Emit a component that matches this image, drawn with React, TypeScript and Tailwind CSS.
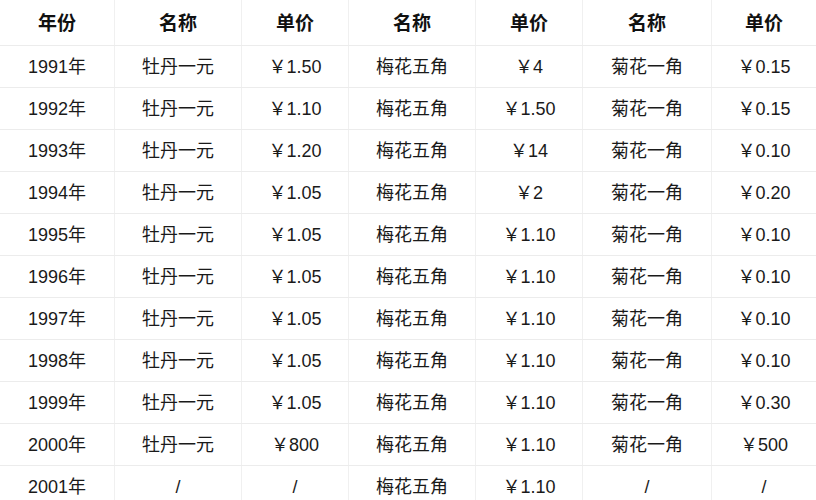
const header = ['年份', '名称', '单价', '名称', '单价', '名称', '单价']

const rows: string[][] = [
  ['1991年', '牡丹一元', '￥1.50', '梅花五角', '￥4', '菊花一角', '￥0.15'],
  ['1992年', '牡丹一元', '￥1.10', '梅花五角', '￥1.50', '菊花一角', '￥0.15'],
  ['1993年', '牡丹一元', '￥1.20', '梅花五角', '￥14', '菊花一角', '￥0.10'],
  ['1994年', '牡丹一元', '￥1.05', '梅花五角', '￥2', '菊花一角', '￥0.20'],
  ['1995年', '牡丹一元', '￥1.05', '梅花五角', '￥1.10', '菊花一角', '￥0.10'],
  ['1996年', '牡丹一元', '￥1.05', '梅花五角', '￥1.10', '菊花一角', '￥0.10'],
  ['1997年', '牡丹一元', '￥1.05', '梅花五角', '￥1.10', '菊花一角', '￥0.10'],
  ['1998年', '牡丹一元', '￥1.05', '梅花五角', '￥1.10', '菊花一角', '￥0.10'],
  ['1999年', '牡丹一元', '￥1.05', '梅花五角', '￥1.10', '菊花一角', '￥0.30'],
  ['2000年', '牡丹一元', '￥800', '梅花五角', '￥1.10', '菊花一角', '￥500'],
  ['2001年', '/', '/', '梅花五角', '￥1.10', '/', '/'],
]

const cols = 'grid grid-cols-[115px_127px_107px_127px_107px_129px_104px]'

export default function App() {
  return (
    <div className="w-[816px] h-[500px] overflow-hidden bg-white font-['Liberation_Sans','Noto_Sans_CJK_SC',sans-serif] text-[#1a1a1a]">
      {/* header */}
      <div className={`${cols} h-[46px] border-b border-[#ececec]`}>
        {header.map((h, i) => (
          <div
            key={i}
            className="flex items-center justify-center pt-[3px] border-r border-[#f0f0f0] last:border-r-0 text-[19px] font-bold text-[#111]"
          >
            {h}
          </div>
        ))}
      </div>

      {rows.map((r, ri) => (
        <div key={ri} className={`${cols} h-[42px] border-b border-[#ececec]`}>
          {r.map((c, ci) => (
            <div
              key={ci}
              className="flex items-center justify-center pt-[2px] border-r border-[#f0f0f0] last:border-r-0 text-[18px]"
            >
              {c}
            </div>
          ))}
        </div>
      ))}
    </div>
  )
}
